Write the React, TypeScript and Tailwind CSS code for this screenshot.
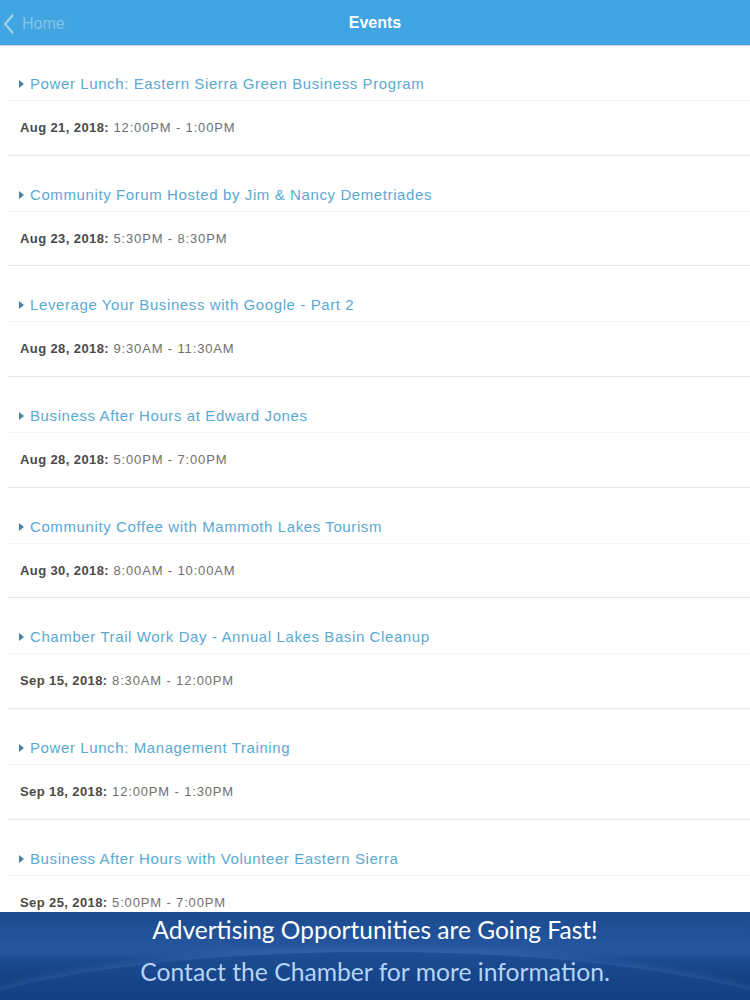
import React from "react";

const events = [
  { title: "Power Lunch: Eastern Sierra Green Business Program", date: "Aug 21, 2018:", time: "12:00PM - 1:00PM" },
  { title: "Community Forum Hosted by Jim & Nancy Demetriades", date: "Aug 23, 2018:", time: "5:30PM - 8:30PM" },
  { title: "Leverage Your Business with Google - Part 2", date: "Aug 28, 2018:", time: "9:30AM - 11:30AM" },
  { title: "Business After Hours at Edward Jones", date: "Aug 28, 2018:", time: "5:00PM - 7:00PM" },
  { title: "Community Coffee with Mammoth Lakes Tourism", date: "Aug 30, 2018:", time: "8:00AM - 10:00AM" },
  { title: "Chamber Trail Work Day - Annual Lakes Basin Cleanup", date: "Sep 15, 2018:", time: "8:30AM - 12:00PM" },
  { title: "Power Lunch: Management Training", date: "Sep 18, 2018:", time: "12:00PM - 1:30PM" },
  { title: "Business After Hours with Volunteer Eastern Sierra", date: "Sep 25, 2018:", time: "5:00PM - 7:00PM" },
];

export default function App() {
  return (
    <div className="relative w-[750px] h-[1000px] overflow-hidden bg-white" style={{ fontFamily: '"Liberation Sans", Arial, sans-serif' }}>
      <div className="h-[45px] bg-[#40a5e0] flex items-center relative shadow-[0_1px_1px_rgba(0,0,0,0.15)]">
        <div className="flex items-center pl-[3px] gap-[8px] pt-[2px]">
          <svg width="11" height="20" viewBox="0 0 11 20">
            <path d="M9.5 1.5 L2 10 L9.5 18.5" fill="none" stroke="#9fd0f0" strokeWidth="2.2" strokeLinecap="round" strokeLinejoin="round" />
          </svg>
          <span className="text-[16px] text-[#86c2e8]">Home</span>
        </div>
        <div className="absolute left-0 right-0 top-[13px] text-center text-white text-[16px] leading-[20px] font-semibold pointer-events-none">Events</div>
      </div>
      <div className="flex flex-col">
        {events.map((e, i) => (
          <div key={i} className="h-[110.7px] ml-[8px] border-b border-[#e6e6e6] flex flex-col">
            <div className="h-[56px] pt-[29px] border-b border-[#f4f4f4] pl-[11px]">
              <div className="flex items-center gap-[6px] h-[20px]">
                <svg width="5" height="8" viewBox="0 0 5 8">
                  <path d="M0 0 L5 4 L0 8 Z" fill="#4a7fa8" />
                </svg>
                <span className="text-[15px] leading-[20px] tracking-[0.6px] text-[#5aa9d2]">{e.title}</span>
              </div>
            </div>
            <div className="pl-[12px] pt-[18px] text-[13px] leading-[18px]">
              <span className="font-bold text-[#4a4a4a] tracking-[0.4px]">{e.date}</span>
              <span className="text-[#707070] tracking-[0.85px]"> {e.time}</span>
            </div>
          </div>
        ))}
      </div>
      <div
        className="absolute left-0 right-0 bottom-0 h-[88px] flex flex-col items-center overflow-hidden"
        style={{
          background: "linear-gradient(to bottom, #1b4a8e 0%, #2657a0 45%, #1a4a90 55%, #0e3674 100%)",
          fontFamily: 'Lato, "Open Sans", sans-serif',
        }}
      >
        <div
          className="absolute left-[-100px] right-[-100px] top-[40px] h-[200px] rounded-[50%]"
          style={{ background: "linear-gradient(to bottom, #1d4d94 0%, #103a7c 30%, #0c316c 60%)", boxShadow: "0 -3px 8px rgba(80,130,200,0.35)" }}
        />
        <div className="relative text-white text-[24.5px] leading-[30px] mt-[3px]">Advertising Opportunities are Going Fast!</div>
        <div className="relative text-[#b5d3f2] text-[24.7px] leading-[30px] mt-[12px]">Contact the Chamber for more information.</div>
      </div>
    </div>
  );
}
